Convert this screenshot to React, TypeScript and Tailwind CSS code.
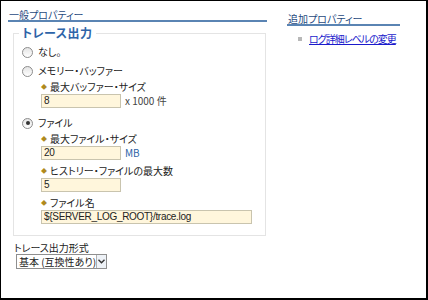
import React from 'react';

function Radio({ checked, label }: { checked?: boolean; label: string }) {
  return (
    <div className="flex items-center h-[12px]">
      <span className="flex items-center justify-center w-[11px] h-[11px] rounded-full border border-[#8c8c8c] bg-gradient-to-b from-[#e4e4e4] to-white ml-[5px]">
        {checked && <span className="w-[4px] h-[4px] rounded-full bg-[#333]" />}
      </span>
      <span className="ml-[5px] text-[10px] leading-[12px] text-[#222]">{label}</span>
    </div>
  );
}

function Field({ label, value, width, suffix, suffixClass, gap }: { label: string; value: string; width: string; suffix?: string; suffixClass?: string; gap: string }) {
  return (
    <div className={`ml-[24px] ${gap}`}>
      <div className="flex items-center h-[12px]">
        <span className="text-[6px] text-[#b08a1c] mr-[3px] leading-none">◆</span>
        <span className="text-[10px] leading-[12px] text-[#222]">{label}</span>
      </div>
      <div className="flex items-center mt-[1px]">
        <div className={`${width} h-[14px] bg-[#fff6dc] border border-[#c9c4ae] px-[2px] text-[10px] tracking-[-0.3px] leading-[12px] text-[#222] font-['Liberation_Sans',Arial,sans-serif]`}>
          {value}
        </div>
        {suffix && <span className={`ml-[4px] text-[10px] leading-[12px] ${suffixClass}`}>{suffix}</span>}
      </div>
    </div>
  );
}

export default function App() {
  return (
    <div className="w-[428px] h-[300px] bg-white border-t border-l border-r-2 border-b-2 border-black overflow-hidden font-['Noto_Sans_CJK_JP','Noto_Sans',sans-serif] [font-feature-settings:'palt']">
      <div className="flex">
        <div className="w-[259px] ml-[7px] mt-[8px]">
          <div className="text-[10px] text-[#1f4a80] leading-[11px] border-b-2 border-[#5a84b3] pl-[1px]">一般プロパティー</div>
          <fieldset className="ml-[5px] w-[253px] border border-[#e4e4e4] mt-[4px] pb-[11px] pl-[3px] min-w-0">
            <legend className="text-[12px] font-bold text-[#2e64a8] px-[3px] leading-[14px] ml-[2px] tracking-[0.5px]">トレース出力</legend>
            <div className="flex flex-col">
              <div className="mt-[6px]"><Radio label="なし。" /></div>
              <div className="mt-[7px]"><Radio label="メモリー・バッファー" /></div>
              <Field gap="mt-[4px]" label="最大バッファー・サイズ" value="8" width="w-[80px]" suffix="x 1000 件" suffixClass="text-[#444]" />
              <div className="mt-[9px]"><Radio checked label="ファイル" /></div>
              <Field gap="mt-[4px]" label="最大ファイル・サイズ" value="20" width="w-[80px]" suffix="MB" suffixClass="text-[#2e64a8]" />
              <Field gap="mt-[5px]" label="ヒストリー・ファイルの最大数" value="5" width="w-[80px]" />
              <Field gap="mt-[5px]" label="ファイル名" value="${SERVER_LOG_ROOT}/trace.log" width="w-[211px]" />
            </div>
          </fieldset>
          <div className="ml-[6px] mt-[6px] text-[10px] text-[#222] leading-[12px]">トレース出力形式</div>
          <div className="ml-[8px] mt-0 flex items-center h-[15px] w-[91px] border border-[#8f8f8f] bg-white">
            <span className="text-[10px] text-[#222] pl-[2px] flex-1 leading-[13px] whitespace-nowrap">基本 (互換性あり)</span>
            <span className="w-[12px] h-[13px] border-l border-[#b0b0b0] bg-[#eef2f7] flex items-center justify-center">
              <svg width="7" height="5" viewBox="0 0 7 5"><path d="M0.5 0.8 L3.5 3.8 L6.5 0.8" stroke="#333" strokeWidth="1.4" fill="none" /></svg>
            </span>
          </div>
        </div>
        <div className="ml-[20px] mt-[12px] w-[113px]">
          <div className="text-[10px] text-[#1f4a80] leading-[11px] border-b-2 border-[#5a84b3] pl-[1px]">追加プロパティー</div>
          <div className="flex items-center mt-[7px] ml-[11px]">
            <span className="shrink-0 w-[4px] h-[4px] bg-[#b8b8b8] mr-[7px]" />
            <a className="text-[10px] tracking-[-1px] text-[#1a1acc] underline leading-[12px] whitespace-nowrap" href="#">ログ詳細レベルの変更</a>
          </div>
        </div>
      </div>
    </div>
  );
}
